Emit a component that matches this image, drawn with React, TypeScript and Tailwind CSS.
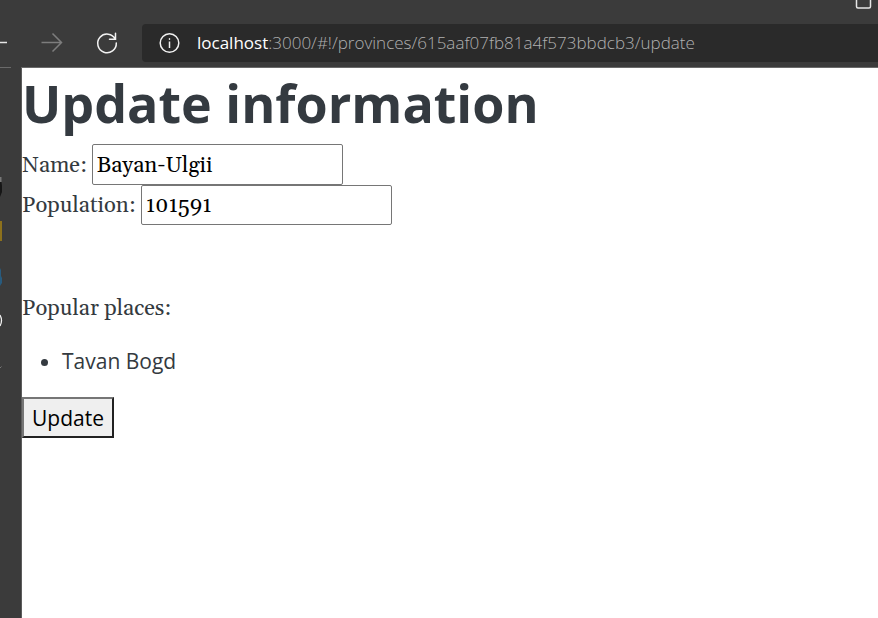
import { useState } from "react";

function BrowserBar() {
  return (
    <header className="flex h-[68px] flex-col overflow-hidden bg-[#3b3b3b]">
      <div className="flex h-6 shrink-0 justify-end pr-[3px]">
        <button type="button" aria-label="Maximize" className="h-4 w-6">
          <svg width="24" height="16" viewBox="0 0 24 16" fill="none" stroke="#e6e6e6" strokeWidth="1.5">
            <path d="M5.500 -7v13.500a1.500 1.500 0 0 0 1.500 1.500h11a1.500 1.500 0 0 0 1.500-1.500V-7" />
          </svg>
        </button>
      </div>
      <div className="flex h-[38px] items-center">
        <nav className="flex w-[142px] shrink-0 items-center">
          <button type="button" aria-label="Back" className="h-6 w-10">
            <svg width="40" height="24" viewBox="0 0 40 24" fill="none" stroke="#e6e6e6" strokeWidth="1.5">
              <path d="M-13 11.500H7" />
            </svg>
          </button>
          <button type="button" aria-label="Forward" className="h-6 w-6">
            <svg width="24" height="24" viewBox="0 0 24 24" fill="none" stroke="#7d7d7d" strokeWidth="1.5">
              <path d="M1.500 11.500H22M12.500 2.500l9 9-9 9" />
            </svg>
          </button>
          <button type="button" aria-label="Refresh" className="ml-[31px] h-6 w-6">
            <svg width="24" height="24" viewBox="0 0 24 24" fill="none" stroke="#f2f2f2" strokeWidth="1.5" strokeLinecap="round">
              <path d="M20.300 8.200A9.300 9.300 0 1 0 21.300 12M20.500 2.300v6h-6" />
            </svg>
          </button>
        </nav>
        <div className="flex h-[38px] grow items-center rounded-l bg-[#2a2a2a] pl-4">
          <svg width="24" height="24" viewBox="0 0 24 24" fill="none" stroke="#f2f2f2" strokeWidth="1.5" className="shrink-0">
            <circle cx="11.500" cy="12" r="9.300" />
            <path d="M11.500 10.500v6.500" />
            <circle cx="11.500" cy="8" r="0.500" fill="#f2f2f2" strokeWidth="1" />
          </svg>
          <p className="ml-[15px] whitespace-nowrap font-['Open_Sans','Noto_Sans',sans-serif] text-[17px] font-light leading-6 text-[#b0b0b0]">
            <span className="font-normal text-white">localhost</span>:3000/#!/provinces/615aaf07fb81a4f573bbdcb3/update
          </p>
        </div>
      </div>
      <div className="mt-auto flex h-px justify-between bg-[#3b3b3b]">
        <div className="w-[11px] bg-[#6a6a6a]" />
        <div className="ml-[10px] grow bg-[#6a6a6a]" />
      </div>
    </header>
  );
}

function SideStrip() {
  return (
    <aside className="w-[22px] shrink-0 border-r border-[#5c5c5c] bg-[#3b3b3b]">
      <svg width="21" height="320" viewBox="0 68 21 320" fill="none">
        <path d="M0 177h1.500v5H0z" fill="#777" />
        <path d="M0 182h1.500l.5 4v6l-2 5z" fill="#161616" />
        <path d="M0 221h2v20H0z" fill="#8d711c" />
        <path d="M0 268l1 2v6l1 2v5l-2 3z" fill="#285b7e" />
        <path d="M0 315q3 5.500 0 11" stroke="#f2f2f2" strokeWidth="1.300" />
        <path d="M0 368l1.500-1.500" stroke="#777" />
      </svg>
    </aside>
  );
}

export default function App() {
  const [name, setName] = useState("Bayan-Ulgii");
  const [population, setPopulation] = useState("101591");
  const places = ["Tavan Bogd"];

  return (
    <div className="flex min-h-screen flex-col bg-white">
      <BrowserBar />
      <div className="flex grow">
        <SideStrip />
        <main className="grow font-['Open_Sans','Noto_Sans',sans-serif] text-[21px] leading-8 text-[#343a40]">
          <h1 className="pb-1.5 text-[52px] font-bold leading-[70px]">Update information</h1>
          <form onSubmit={(event) => event.preventDefault()}>
            <div className="flex items-center gap-[5px] font-['Gelasio','Liberation_Serif',serif] text-[22px]">
              <label htmlFor="name" className="pt-0.5">Name:</label>
              <input
                id="name"
                value={name}
                onChange={(event) => setName(event.target.value)}
                className="h-[41px] w-[251px] rounded-xs border border-[#767676] bg-white px-1 pt-0.5 text-black"
              />
            </div>
            <div className="flex items-center gap-[5px] font-['Gelasio','Liberation_Serif',serif] text-[22px]">
              <label htmlFor="population" className="pt-0.5">Population:</label>
              <input
                id="population"
                value={population}
                onChange={(event) => setPopulation(event.target.value)}
                className="h-10 w-[251px] rounded-xs border border-[#767676] bg-white px-1 pt-0.5 text-black"
              />
            </div>
            <p className="mt-[68px] font-['Gelasio','Liberation_Serif',serif] text-[22px]">Popular places:</p>
            <ul className="my-5 list-disc pl-10">
              {places.map((place) => (
                <li key={place}>{place}</li>
              ))}
            </ul>
            <button
              type="submit"
              className="h-[41px] border-2 border-t-[#767676] border-r-[#212121] border-b-[#212121] border-l-[#767676] bg-[#efefef] px-2 text-black"
            >
              Update
            </button>
          </form>
        </main>
      </div>
    </div>
  );
}
